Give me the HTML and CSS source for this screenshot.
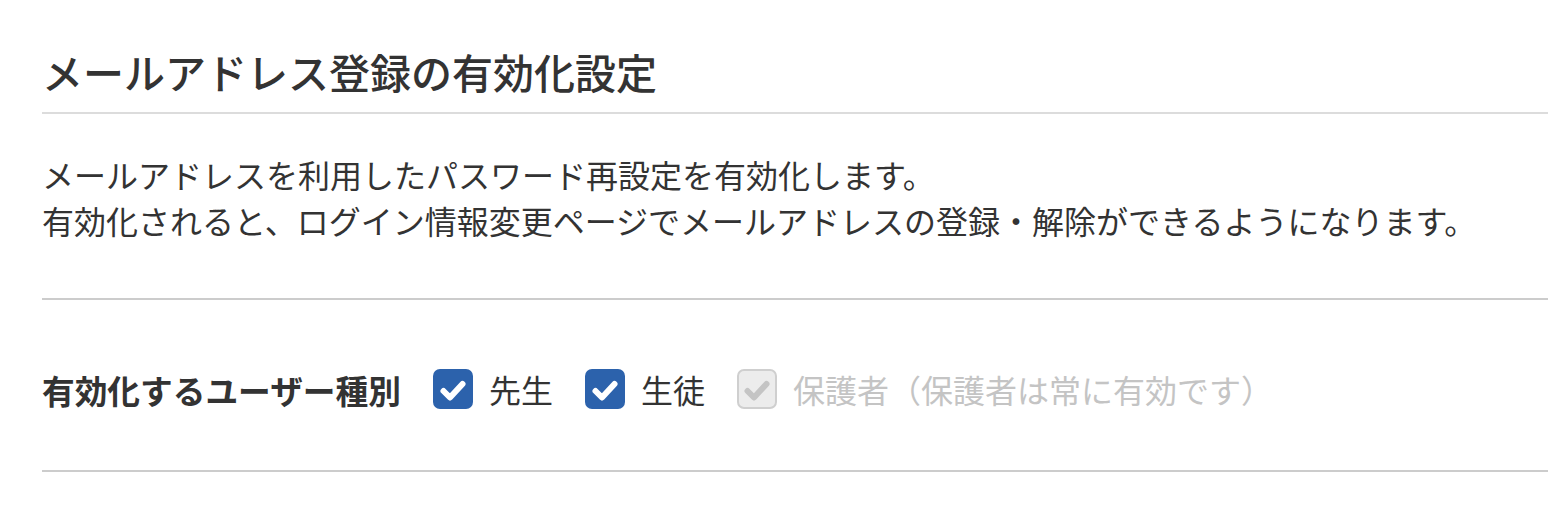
FILE: index.html
```html
<!DOCTYPE html>
<html lang="ja">
<head>
<meta charset="utf-8">
<link rel="stylesheet" href="styles.css">
</head>
<body>
<section class="panel">
  <h1 class="title">メールアドレス登録の有効化設定</h1>
  <div class="desc">
    <p>メールアドレスを利用したパスワード再設定を有効化します。</p>
    <p>有効化されると、ログイン情報変更ページでメールアドレスの登録・解除ができるようになります。</p>
  </div>
  <div class="row">
    <span class="label">有効化するユーザー種別</span>
    <label class="opt">
      <span class="box checked"><svg viewBox="0 0 40 40"><path d="M10.5 22 L17 28.5 L29.5 15" fill="none" stroke="#fff" stroke-width="6" stroke-linecap="round" stroke-linejoin="round"/></svg></span>
      <span class="txt">先生</span>
    </label>
    <label class="opt">
      <span class="box checked"><svg viewBox="0 0 40 40"><path d="M10.5 22 L17 28.5 L29.5 15" fill="none" stroke="#fff" stroke-width="6" stroke-linecap="round" stroke-linejoin="round"/></svg></span>
      <span class="txt">生徒</span>
    </label>
    <label class="opt disabled">
      <span class="box"><svg viewBox="0 0 36 36"><path d="M8.5 20 L15 26.5 L27.5 13" fill="none" stroke="#c4c4c4" stroke-width="6" stroke-linecap="round" stroke-linejoin="round"/></svg></span>
      <span class="txt">保護者（保護者は常に有効です）</span>
    </label>
  </div>
</section>
</body>
</html>
```

FILE: styles.css
```css
html, body {
  margin: 0;
  padding: 0;
  background: #fff;
}
body {
  font-family: "Noto Sans CJK JP", "Noto Sans", sans-serif;
  color: #333;
}
.panel {
  padding: 30px 0 0 42px;
}
.title {
  margin: 0;
  font-size: 41px;
  font-weight: 500;
  line-height: 82px;
  border-bottom: 2px solid #dcdcdc;
}
.desc {
  padding: 37px 0 55px;
  border-bottom: 2px solid #cccccc;
}
.desc p {
  margin: 0;
  font-size: 32px;
  line-height: 46px;
}
.row {
  display: flex;
  align-items: center;
  padding-top: 8px;
  height: 162px;
  border-bottom: 2px solid #cccccc;
}
.label {
  font-size: 32.7px;
  font-weight: 700;
  margin-right: 32px;
}
.opt {
  display: flex;
  align-items: center;
  gap: 16px;
  margin-right: 32px;
}
.box {
  width: 40px;
  height: 40px;
  border-radius: 7px;
  box-sizing: border-box;
  display: flex;
}
.box svg {
  width: 100%;
  height: 100%;
}
.box.checked {
  background: #2c62ac;
}
.opt.disabled .box {
  background: #ececec;
  border: 2px solid #cfcfcf;
}
.txt {
  font-size: 32px;
}
.opt.disabled .txt {
  color: #c4c4c4;
}
```
